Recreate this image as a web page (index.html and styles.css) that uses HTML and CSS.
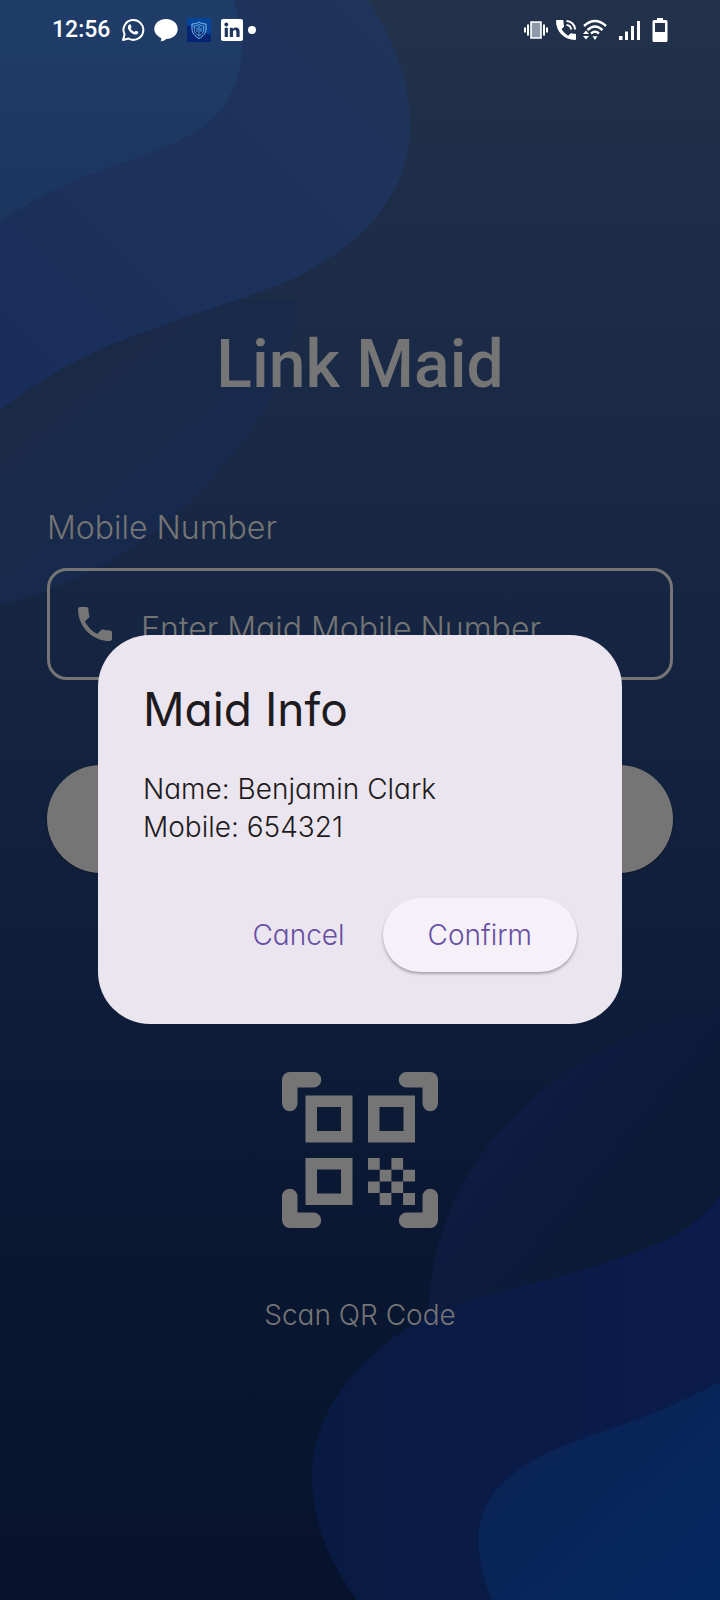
FILE: index.html
```html
<!DOCTYPE html>
<html lang="en">
<head>
<meta charset="utf-8">
<meta name="viewport" content="width=device-width, initial-scale=1">
<title>Link Maid</title>
<link rel="stylesheet" href="styles.css">
</head>
<body>
<svg class="backdrop" viewBox="0 0 720 1600" preserveAspectRatio="none" aria-hidden="true">
  <defs>
    <linearGradient id="base" x1="0" y1="0" x2="0" y2="1">
      <stop offset="0" stop-color="#23324b"/><stop offset=".1" stop-color="#1f2e48"/>
      <stop offset=".25" stop-color="#1a2945"/><stop offset=".38" stop-color="#162642"/>
      <stop offset=".56" stop-color="#101f3c"/><stop offset=".75" stop-color="#0a1833"/>
      <stop offset="1" stop-color="#07132c"/>
    </linearGradient>
    <linearGradient id="t1" x1="0" y1="0" x2="0" y2="1"><stop offset="0" stop-color="#203d69"/><stop offset="1" stop-color="#1b355f"/></linearGradient>
    <linearGradient id="t2" x1="1" y1="0" x2="0" y2="1"><stop offset="0" stop-color="#20355b"/><stop offset="1" stop-color="#192d5b"/></linearGradient>
    <linearGradient id="t3" gradientUnits="userSpaceOnUse" x1="60" y1="350" x2="200" y2="520"><stop offset="0" stop-color="#1a2945"/><stop offset="1" stop-color="#172a4e"/></linearGradient>
    <linearGradient id="b3" gradientUnits="userSpaceOnUse" x1="520" y1="1110" x2="640" y2="1210"><stop offset="0" stop-color="#0d1c40"/><stop offset="1" stop-color="#0b1a35"/></linearGradient>
    <linearGradient id="b2" x1="0" y1="0" x2="1" y2="0"><stop offset="0" stop-color="#091a42"/><stop offset="1" stop-color="#0b1c4c"/></linearGradient>
    <linearGradient id="b1" x1="0" y1="0" x2="1" y2="1"><stop offset="0" stop-color="#0b2250"/><stop offset="1" stop-color="#052861"/></linearGradient>
  </defs>
  <path fill="url(#base)" d="M0 0H720V1600H0z"/>
  <path fill="url(#t3)" d="M0 300H295C296 370 260 425 215 475C165 530 100 580 0 605z"/>
  <path fill="url(#t2)" d="M0 0H368C395 40 411 85 410 130C408 190 370 240 295 278C230 305 170 320 110 345C60 367 25 390 0 410z"/>
  <path fill="url(#t1)" d="M0 0H233C248 45 247 90 205 125C170 152 120 160 70 183C40 196 20 208 0 222z"/>
  <path fill="url(#b3)" d="M720 1008C640 1025 570 1060 520 1110C465 1165 432 1225 428 1315H720z"/>
  <path fill="url(#b2)" d="M720 1195C700 1225 670 1240 630 1254C560 1282 470 1293 420 1320C350 1362 310 1420 312 1480C314 1530 334 1568 357 1600H720z"/>
  <path fill="url(#b1)" d="M720 1382C680 1403 640 1420 590 1436C520 1460 484 1488 479 1530C477 1555 483 1578 492 1600H720z"/>
</svg>

<header class="status">
  <div class="status-left">
    <time class="clock">12:56</time>
    <svg width="24" height="24" viewBox="0 0 24 24" fill="none" stroke="#fff" stroke-width="2" aria-hidden="true"><path d="M2 22l1.6-5.6A9.9 9.9 0 1 1 7.500 20.500z" stroke-linejoin="round"/><path fill="#fff" stroke="none" d="M8.300 6.500c.4-.3 1-.3 1.300.2l.9 2.100c.1.400-.6 1.200-.9 1.500.8 1.700 2 2.800 3.900 3.600.5-.4 1-1.300 1.500-1.200l2.200 1.100c.3.300 0 1.500-.6 2.100-1 .9-2.700.9-4.900-.2-2.200-1.200-3.900-3-4.700-5.200-.4-1.600.2-3.200 1.300-4z"/></svg>
    <svg width="24" height="24" viewBox="0 0 24 24" fill="#fff" aria-hidden="true"><path d="M12 1C18.500 1 23.700 5.300 23.700 11S18.500 21 12 21c-.6 1-2.400 2.200-5.500 2.200.8-1 1-2.300.6-3.300C3 18 .3 14.800.3 11 .3 5.300 5.500 1 12 1z"/></svg>
    <svg width="24" height="24" viewBox="0 0 24 24" fill="none" aria-hidden="true"><path fill="#06439a" d="M0 0h24v24H0z"/><path fill="#042574" d="M0 7l24 10v7H0z"/><path stroke="#7cc4ee" stroke-width="1" d="M12 4c2 1.500 4.500 2 7 2v5c0 4-3 7.500-7 9.500-4-2-7-5.500-7-9.500V6c2.500 0 5-.5 7-2z"/><path stroke="#7cc4ee" stroke-width=".8" d="M12 6.500c1.500 1 3 1.500 4.700 1.500v3.500c0 2.700-2 5-4.700 6.500-2.700-1.500-4.700-3.800-4.700-6.500V8c1.700 0 3.200-.5 4.700-1.500zM12 8v9M10 10v4M14 10v4"/></svg>
    <svg width="24" height="24" viewBox="0 0 24 24" aria-hidden="true"><rect x="1" y="1" width="22" height="22" rx="2" fill="#fff"/><g fill="#20365f"><circle cx="6.300" cy="6.500" r="1.900"/><path d="M4.700 9.700h3.200V19H4.700zM9.800 9.700h3V11c.6-1 1.600-1.600 3.100-1.600 2.800 0 3.700 1.800 3.700 4.400V19h-3.200v-4.600c0-1.300-.3-2.300-1.600-2.300s-1.800 1-1.800 2.300V19H9.800z"/></g></svg>
    <span class="dot"></span>
  </div>
  <div class="status-right">
    <svg width="24" height="24" viewBox="0 0 24 24" fill="none" stroke="#fff" stroke-width="2" aria-hidden="true"><path fill="#8f98a8" stroke-width="1.600" d="M7 4h10v16H7z"/><path d="M1 9.500v5M23 9.500v5M4 6.500v11M20 6.500v11"/></svg>
    <svg width="24" height="24" viewBox="0 0 24 24" aria-hidden="true"><path fill="#fff" d="M21 15.800c-1.200 0-2.400-.2-3.500-.6-.4-.1-.8 0-1.100.3l-2.200 2.200c-2.800-1.500-5.100-3.800-6.600-6.600l2.200-2.200c.3-.3.400-.7.300-1.100C9.700 6.700 9.500 5.500 9.500 3c0-.5-.5-1-1-1H3c-.6 0-1 .4-1 1 0 10.500 8.500 19 19 19 .5 0 1-.5 1-1v-4.200c0-.5-.5-1-1-1z"/><path fill="none" stroke="#fff" stroke-width="2" d="M12.500 3a8.500 8.500 0 0 1 8.500 8.500M12.500 7a4.500 4.500 0 0 1 4.500 4.500"/></svg>
    <svg class="wifi" width="26" height="24" viewBox="0 0 26 24" fill="none" stroke="#fff" stroke-width="2.400" aria-hidden="true"><path d="M2 8Q13-2 24 8M5.500 12Q13 5 20.500 12M9 15.500Q13 12 17 15.500"/><path fill="#fff" stroke="none" d="M10.500 18.200h5L13 22zM1 16h6L4 12.500zM1 18h6l-3 3.500z"/></svg>
    <svg class="signal" width="24" height="24" viewBox="0 0 24 24" fill="#fff" aria-hidden="true"><path d="M1 18h3.500v4H1zM7 13.500h3V22H7zM13 8h3v14h-3zM19 3h3v19h-3z"/></svg>
    <svg width="16" height="24" viewBox="0 0 16 24" fill="#fff" fill-rule="evenodd" aria-hidden="true"><path d="M5 0h6v2h3q1.500 0 1.500 1.500v19Q15.500 24 14 24H2Q.5 24 .5 22.500v-19Q.5 2 2 2h3zM3 5v9h10V5z"/></svg>
  </div>
</header>

<main class="page">
  <h1 class="title">Link Maid</h1>
  <form class="form">
    <label class="label" for="mobile">Mobile Number</label>
    <div class="field">
      <svg class="field-icon" viewBox="3 3 18 18" fill="currentColor" aria-hidden="true"><path d="M20 15.500c-1.200 0-2.400-.2-3.600-.6-.3-.1-.7 0-1 .2l-2.200 2.200c-2.800-1.400-5.100-3.800-6.600-6.600l2.200-2.200c.3-.3.400-.7.200-1C8.700 6.400 8.500 5.200 8.500 4c0-.5-.5-1-1-1H4c-.5 0-1 .5-1 1 0 9.400 7.600 17 17 17 .5 0 1-.5 1-1v-3.500c0-.5-.5-1-1-1z"/></svg>
      <input class="input" id="mobile" type="tel" placeholder="Enter Maid Mobile Number">
    </div>
    <button class="submit" type="button" aria-label="Link"></button>
  </form>
  <button class="scan" type="button">
    <svg class="qr" viewBox="0 0 156 156" fill="currentColor" aria-hidden="true">
      <g fill="none" stroke="currentColor" stroke-width="15.500" stroke-linecap="round" stroke-linejoin="round"><path d="M31.500 7.750H7.750V31.500M124.500 7.750H148.250V31.500M31.500 148.250H7.750V124.500M124.500 148.250H148.250V124.500"/></g>
      <path fill-rule="evenodd" d="M23.500 23.500h47v47h-47zM35 35v24h24V35zM86 23.500h47v47H86zM97.500 35v24h24V35zM23.500 86h47v47h-47zM35 97.500v24h24v-24z"/>
      <path d="M86 86h11.700v11.700H86zM109.400 86h11.700v11.700h-11.700zM97.700 97.700h11.700v11.700H97.700zM121.100 97.700h11.900v11.700h-11.900zM86 109.400h11.700v11.700H86zM109.400 109.400h11.700v11.700h-11.700zM97.700 121.100h11.700V133H97.700zM121.100 121.100h11.900V133h-11.900z"/>
    </svg>
    <span>Scan QR Code</span>
  </button>
</main>

<div class="overlay">
  <section class="dialog" role="dialog" aria-modal="true" aria-labelledby="dialog-title">
    <h2 class="dialog-title" id="dialog-title">Maid Info</h2>
    <p class="dialog-body">Name: Benjamin Clark<br>Mobile: 654321</p>
    <div class="actions">
      <button class="action" type="button">Cancel</button>
      <button class="action action-raised" type="button">Confirm</button>
    </div>
  </section>
</div>
</body>
</html>
```
FILE: styles.css
```css
* { box-sizing: border-box; }
body {
  margin: 0;
  min-height: 100vh;
  position: relative;
  background: #0a1831;
  color: #757575;
  font-family: Inter, "Open Sans", sans-serif;
  font-feature-settings: "cv11";
  font-weight: 300;
}
button, input { font: inherit; font-feature-settings: inherit; color: inherit; border: 0; padding: 0; margin: 0; background: none; }
svg { display: block; flex: none; }
.backdrop { position: absolute; inset: 0; width: 100%; height: 100%; z-index: -1; }

.status { display: flex; justify-content: space-between; align-items: center; height: 60px; padding: 0 52px; color: #fff; }
.status-left, .status-right { display: flex; align-items: center; }
.status-left { gap: 9px; }
.status-right { gap: 6px; }
.clock { font: 500 23px/28px Roboto, sans-serif; margin-right: 2px; }
.dot { width: 8px; height: 8px; border-radius: 50%; background: #fff; margin-left: -5px; }
.wifi { margin-left: -2px; }
.signal { margin: 0 4px; }

.page { padding: 263px 47px 60px; display: flex; flex-direction: column; }
.title { margin: 0 0 97px; font: 500 66px/84px Roboto, sans-serif; text-align: center; }
.form { display: flex; flex-direction: column; }
.label { font-size: 32px; line-height: 48px; margin-bottom: 16px; }
.field { display: flex; align-items: center; height: 112px; border: 3px solid #757575; border-radius: 20px; padding: 0 28px; }
.field-icon { width: 34px; height: 34px; margin-right: 29px; }
.input { flex: 1; min-width: 0; height: 100%; padding-top: 8px; font-size: 32px; outline: 0; }
.input::placeholder { color: #757575; opacity: 1; }
.submit { height: 108px; margin-top: 85px; border-radius: 54px; background: #757575; box-shadow: 0 1px 3px rgba(0, 0, 0, .3); }
.scan { align-self: center; display: flex; flex-direction: column; align-items: center; gap: 67px; margin-top: 199px; font-size: 28px; line-height: 40px; }
.qr { width: 156px; height: 156px; }

.overlay { position: absolute; inset: 0; padding: 59px 98px 0; display: flex; align-items: center; justify-content: center; }
.dialog { width: 100%; padding: 45px 45px 52px; border-radius: 52px; background: #ebe5ef; color: #1d1b20; }
.dialog-title { margin: 0 0 32px; font-size: 46px; line-height: 58px; font-weight: 400; }
.dialog-body { margin: 0 0 52px; font-size: 28px; line-height: 38px; }
.actions { display: flex; justify-content: flex-end; gap: 16px; }
.action { height: 74px; padding: 0 22px; border-radius: 37px; font-size: 28px; color: #6750a4; }
.action-raised { padding: 0 45px; background: #f6f1f9; box-shadow: 0 2px 3px rgba(0, 0, 0, .3); }
```
